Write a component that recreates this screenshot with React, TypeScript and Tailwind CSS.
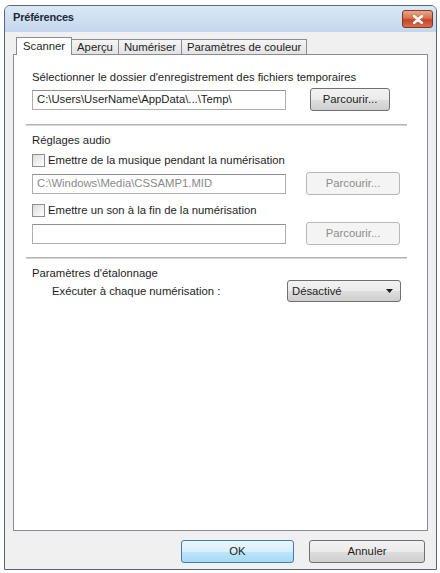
import type { ReactNode } from 'react'

function Btn({ children, width, disabled, primary }: { children: ReactNode; width: string; disabled?: boolean; primary?: boolean }) {
  const border = primary ? 'border-[#3c7fb1]' : disabled ? 'border-[#b5b9bd]' : 'border-[#707070]'
  const bg = disabled
    ? 'bg-[#f4f4f4]'
    : primary
      ? 'bg-[linear-gradient(#eaf6fd_0%,#d9f0fc_50%,#bee6fd_51%,#a7d9f5_100%)]'
      : 'bg-[linear-gradient(#f2f2f2_0%,#ebebeb_50%,#dddddd_51%,#cfcfcf_100%)]'
  return (
    <div className={`${width} h-[23px] rounded-[3px] border ${border} ${bg} flex items-center justify-center`}>
      <span className={`text-[11.3px] ${disabled ? 'text-[#8d8d8d]' : 'text-[#1e1e1e]'}`}>{children}</span>
    </div>
  )
}

function Field({ value, muted }: { value?: string; muted?: boolean }) {
  return (
    <div className="w-[254px] h-[20px] border border-[#abadb3] border-t-[#8e9096] bg-white flex items-center px-[4px]">
      <span className={`text-[11.3px] whitespace-nowrap ${muted ? 'text-[#8a8a8a]' : 'text-[#1e1e1e]'}`}>{value}</span>
    </div>
  )
}

function Check({ label }: { label: string }) {
  return (
    <div className="flex items-center gap-[3px] h-[14px]">
      <div className="w-[13px] h-[13px] border border-[#8f8f8f] bg-[linear-gradient(135deg,#dcdcdc,#ffffff)] p-[2px]">
        <div className="w-full h-full bg-[linear-gradient(135deg,#e4e4e4,#f7f7f7)]" />
      </div>
      <span className="text-[11.3px] text-[#1e1e1e]">{label}</span>
    </div>
  )
}

function Separator() {
  return <div className="ml-[-6px] w-[381px] h-[2px] border-t border-[#b4b4b4] border-b-white bg-[#d5d5d5]" />
}

const tabs = ['Aperçu', 'Numériser', 'Paramètres de couleur']

export default function App() {
  return (
    <div className="w-[440px] h-[573px] bg-white pt-[5px] pl-[4px] pr-[3px] pb-[3px]" style={{ fontFamily: '"Liberation Sans", Arial, sans-serif' }}>
      <div className="flex flex-col h-full rounded-t-[6px] border border-[#56687a] bg-[#f0f0f0]">
        <div className="h-[26px] shrink-0 rounded-t-[5px] bg-[linear-gradient(#dbe8f5,#c3d7ec)] flex items-center justify-between pl-[8px] pr-[3px]">
          <span className="text-[11px] font-bold text-[#1b2a3a] tracking-[-0.2px] mt-[-3px]">Préférences</span>
          <div className="w-[31px] h-[18px] rounded-[3px] border border-[#7a3a2a] bg-[linear-gradient(#e8a58b_0%,#d9714f_45%,#c4452a_55%,#d96e4a_100%)] flex items-center justify-center">
            <svg width="10" height="9" viewBox="0 0 10 9">
              <path d="M1 1 L9 8 M9 1 L1 8" stroke="#ffffff" strokeWidth="2.4" strokeLinecap="round" />
            </svg>
          </div>
        </div>

        <div className="flex-1 flex flex-col px-[8px] pt-[5px]">
          <div className="flex items-end h-[17px] pl-[3px] relative z-10">
            <div className="h-[18px] mb-[-1px] px-[6px] bg-white border border-b-0 border-[#898c95] flex items-center">
              <span className="text-[11.3px] text-[#1e1e1e]">Scanner</span>
            </div>
            {tabs.map((t) => (
              <div key={t} className="h-[15px] px-[5px] ml-[-1px] border border-b-0 border-[#898c95] bg-[linear-gradient(#f5f5f5,#e3e3e3)] flex items-center first:ml-0">
                <span className="text-[11.3px] text-[#1e1e1e]">{t}</span>
              </div>
            ))}
          </div>

          <div className="flex-1 border border-[#898c95] bg-white pl-[18px] pt-[15px]">
            <div className="text-[11.3px] text-[#1e1e1e] h-[14px] leading-[14px]">Sélectionner le dossier d'enregistrement des fichiers temporaires</div>
            <div className="flex items-center gap-[24px] mt-[4px]">
              <Field value="C:\Users\UserName\AppData\...\Temp\" />
              <Btn width="w-[80px]">Parcourir...</Btn>
            </div>
            <div className="mt-[13px]">
              <Separator />
            </div>

            <div className="text-[11.3px] text-[#1e1e1e] h-[14px] leading-[14px] mt-[7px]">Réglages audio</div>
            <div className="mt-[6px]">
              <Check label="Emettre de la musique pendant la numérisation" />
            </div>
            <div className="flex items-center gap-[20px] mt-[5px]">
              <Field value="C:\Windows\Media\CSSAMP1.MID" muted />
              <Btn width="w-[94px]" disabled>Parcourir...</Btn>
            </div>
            <div className="mt-[8px]">
              <Check label="Emettre un son à la fin de la numérisation" />
            </div>
            <div className="flex items-center gap-[20px] mt-[5px]">
              <Field />
              <Btn width="w-[94px]" disabled>Parcourir...</Btn>
            </div>
            <div className="mt-[12px]">
              <Separator />
            </div>

            <div className="text-[11.3px] text-[#1e1e1e] h-[14px] leading-[14px] mt-[7px]">Paramètres d'étalonnage</div>
            <div className="flex items-center">
              <span className="text-[11.3px] text-[#1e1e1e] pl-[20px] w-[255px]">Exécuter à chaque numérisation :</span>
              <div className="w-[114px] h-[22px] rounded-[3px] border border-[#707070] bg-[linear-gradient(#f2f2f2_0%,#ebebeb_50%,#dddddd_51%,#cfcfcf_100%)] flex items-center justify-between pl-[4px] pr-[7px]">
                <span className="text-[11.3px] text-[#1e1e1e]">Désactivé</span>
                <svg width="7" height="4" viewBox="0 0 7 4">
                  <path d="M0 0 H7 L3.5 4 Z" fill="#1e1e1e" />
                </svg>
              </div>
            </div>
          </div>

          <div className="flex justify-end gap-[15px] pt-[9px] pb-[6px] pr-[3px]">
            <Btn width="w-[113px]" primary>OK</Btn>
            <Btn width="w-[116px]">Annuler</Btn>
          </div>
        </div>
      </div>
    </div>
  )
}
